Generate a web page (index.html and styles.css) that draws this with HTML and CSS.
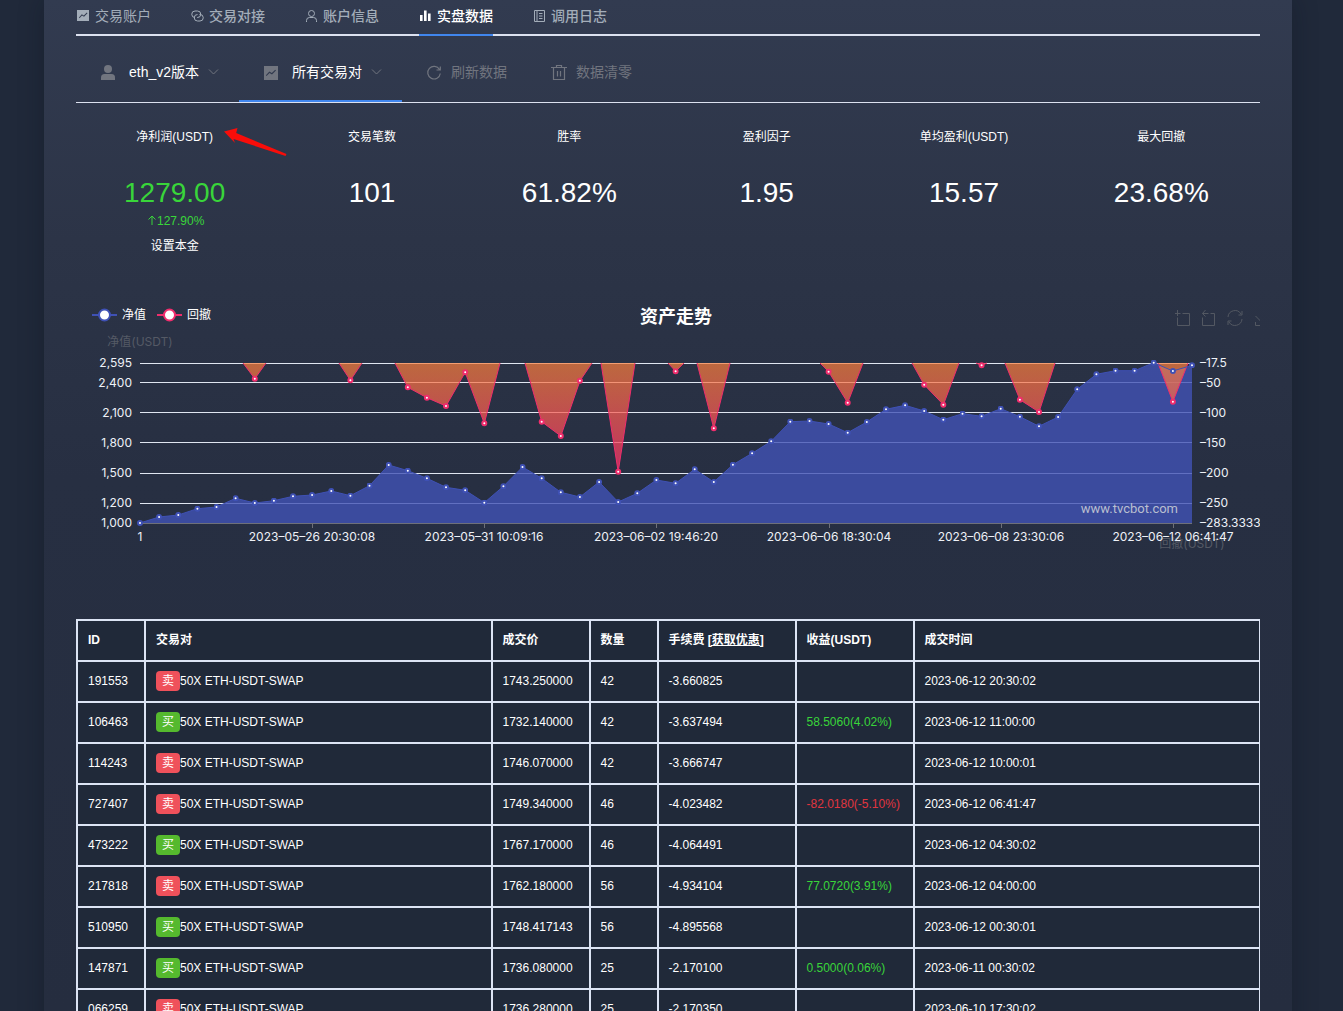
FILE: index.html
```html
<!DOCTYPE html>
<html lang="zh-CN">
<head>
<meta charset="utf-8">
<meta name="viewport" content="width=device-width, initial-scale=1">
<title>实盘数据</title>
<link rel="stylesheet" href="styles.css">
</head>
<body>
<main class="panel">
  <nav class="tabs">
    <a class="tab tab-light" href="#account"><svg class="icon" viewBox="0 0 14 14"><path fill="currentColor" fill-rule="evenodd" d="M0 1h12v11H0zM2.500 9.200l2.500-2.700 2 1.300L10.500 4.300l-.7-.7-3 2.900-2-1.300L2 8.500z"/></svg>交易账户</a>
    <a class="tab" href="#connect"><svg class="icon" viewBox="0 0 14 14" fill="none" stroke="currentColor"><path d="M4 8.500A3.200 3.200 0 0 1 4 2h2.500a3.200 3.200 0 0 1 0 6.500H6M8.500 5.500H9a3.200 3.200 0 0 1 0 6.500H6.500a3.200 3.200 0 0 1 0-6.500"/></svg>交易对接</a>
    <a class="tab" href="#info"><svg class="icon" viewBox="0 0 14 14" fill="none" stroke="currentColor"><circle cx="6.500" cy="4.500" r="3"/><path d="M1.500 13v-1.500Q1.500 8.500 4.500 8.500h4q3 0 3 3V13"/></svg>账户信息</a>
    <a class="tab tab-active" href="#live"><svg class="icon" viewBox="0 0 14 14"><path fill="currentColor" d="M1 6h2.600v6H1zM5 1.500h2.600V12H5zM9 4.500h2.600V12H9z"/></svg>实盘数据</a>
    <a class="tab" href="#logs"><svg class="icon" viewBox="0 0 14 14" fill="none" stroke="currentColor"><path d="M1.500 1.500h10v11h-10zM4 1.500v11M6 4.500h3.500M6 7h3.500M6 9.500h3.500"/></svg>调用日志</a>
  </nav>

  <div class="menu">
    <button class="menu-item menu-select" type="button"><svg class="menu-icon" viewBox="0 0 24 24"><circle cx="12" cy="9" r="4" fill="currentColor"/><path fill="currentColor" d="M5 20v-2.500q0-3.500 3.500-3.500h7q3.500 0 3.500 3.500v2.500z"/></svg><span>eth_v2版本</span><svg class="chevron" viewBox="0 0 11 12"><path d="M1 3.500l4.500 4.500L10 3.500" fill="none" stroke="currentColor"/></svg></button>
    <button class="menu-item menu-select menu-active" type="button"><svg class="menu-icon" viewBox="0 0 24 24"><path fill="currentColor" fill-rule="evenodd" d="M5 6h14v14H5zM7.500 16l3-3 2.500 1.500 4-4-.8-.8-3.400 3.300-2.400-1.500-3.500 3.700z"/></svg><span>所有交易对</span><svg class="chevron" viewBox="0 0 11 12"><path d="M1 3.500l4.500 4.500L10 3.500" fill="none" stroke="currentColor"/></svg></button>
    <button class="menu-item" type="button"><svg class="menu-icon" viewBox="0 0 24 24" fill="none" stroke="currentColor" stroke-width="1.200"><path d="M17.500 9.500A6.300 6.300 0 1 0 18.300 13.500M18.300 6.500v3.500H14.500"/></svg><span>刷新数据</span></button>
    <button class="menu-item" type="button"><svg class="menu-icon" viewBox="0 0 24 24" fill="none" stroke="currentColor" stroke-width="1.200"><path d="M4 7.500h16M6.500 7.500v12h11v-12M9.500 7V5.500h5V7M10.500 11v5.500M13.500 11v5.500"/></svg><span>数据清零</span></button>
  </div>

  <section class="stats">
    <div class="stat">
      <div class="stat-label">净利润(USDT)<svg class="pointer" viewBox="0 0 64 30"><path fill="#f80d0a" d="M1 4.500L14.500 1l-1.300 5 50.300 21-1 2L10.500 12l1.500 4z"/></svg></div>
      <div class="stat-value up">1279.00</div>
      <div class="stat-change up"><svg class="arrow-up" viewBox="0 0 10 12"><path d="M5 10V1M1.500 4.500L5 1l3.500 3.500" fill="none" stroke="currentColor"/></svg>127.90%</div>
      <button class="capital" type="button">设置本金</button>
    </div>
    <div class="stat"><div class="stat-label">交易笔数</div><div class="stat-value">101</div></div>
    <div class="stat"><div class="stat-label">胜率</div><div class="stat-value">61.82%</div></div>
    <div class="stat"><div class="stat-label">盈利因子</div><div class="stat-value">1.95</div></div>
    <div class="stat"><div class="stat-label">单均盈利(USDT)</div><div class="stat-value">15.57</div></div>
    <div class="stat"><div class="stat-label">最大回撤</div><div class="stat-value">23.68%</div></div>
  </section>

  <section class="chart">
    <header class="chart-head">
      <div class="legend">
        <span class="legend-item"><svg class="legend-mark" viewBox="0 0 25 14"><path d="M0 7h25" stroke="#3f51b5" stroke-width="2"/><circle cx="12.500" cy="7" r="5.500" fill="#fff" stroke="#3f51b5" stroke-width="2"/></svg>净值</span>
        <span class="legend-item"><svg class="legend-mark" viewBox="0 0 25 14"><path d="M0 7h25" stroke="#f02d6d" stroke-width="2"/><circle cx="12.500" cy="7" r="5.500" fill="#fff" stroke="#f02d6d" stroke-width="2"/></svg>回撤</span>
      </div>
      <h2 class="chart-title">资产走势</h2>
      <div class="tools">
        <button class="tool" type="button" aria-label="区域缩放"><svg viewBox="0 0 16 18"><path d="M-.5 4.500h6M7.500 4.500h7v12h-12v-8M2.500 1v6"/></svg></button>
        <button class="tool" type="button" aria-label="区域缩放还原"><svg viewBox="0 0 16 18"><path d="M4.500 1L1.500 4.500 4.500 7.500M1.500 4.500h6M9.500 4.500h4v12h-12v-8"/></svg></button>
        <button class="tool" type="button" aria-label="还原"><svg viewBox="0 0 16 18"><path d="M1 8a7 7 0 0 1 13-3M15 2v4h-3.500M15 10a7 7 0 0 1-13 3M1 16v-4h3.500"/></svg></button>
        <button class="tool" type="button" aria-label="保存为图片"><svg viewBox="0 0 16 18"><path d="M2.500 7l5 5L12.500 7M7.500 0v11M7 16.500H2.500V13M7 16.500h7V13"/></svg></button>
      </div>
    </header>
    <svg class="plot" viewBox="76 328 1184 232" role="img" aria-label="资产走势">
      <defs>
        <linearGradient id="fall" gradientUnits="userSpaceOnUse" x1="0" y1="363" x2="0" y2="472"><stop offset="0" stop-color="#fc803c" stop-opacity=".7"/><stop offset="1" stop-color="#f5306b" stop-opacity=".76"/></linearGradient>
        <marker id="dot" viewBox="0 0 6 6" refX="3" refY="3" markerWidth="6" markerHeight="6" markerUnits="userSpaceOnUse"><circle class="worth-dot" cx="3" cy="3" r="2"/></marker>
      </defs>
      <path class="grid" d="M140 363.500H1192M140 382.500H1192M140 412.500H1192M140 442.500H1192M140 473.500H1192M140 503.500H1192"/>
      <path class="axis" d="M140 523.500H1192M312.500 523v5M484.500 523v5M656.500 523v5M829.500 523v5M1001.500 523v5M1173.500 523v5"/>
      <g id="worth-fill"></g>
      <g class="fall">
        <path d="M243 363L254.800 378.700 266 363M339 363L350.400 380.300 362 363M395 363L407.800 387.300 426.900 397.700 446 406 465.200 372.300 484.300 423.300 500 363M525 363L541.700 421.700 560.800 436 580 380.700 592 363M601 363L618.200 471.700 635 363M668 363L675.600 371.300 684 363M697 363L713.800 428.300 730 363M820 363L828.600 371.700 847.700 402.700 863 363M912 363L924.200 384.700 943.400 404.700 959 363M976 363L981.600 365.300 987 363M1005 363L1019.900 399.700 1039 412 1055 363M1158 363L1172.900 401.700 1188 363"/>
      </g>
      <g id="worth"></g>
      <g id="fall-dots"></g>
      <g class="scale" text-anchor="end"><text x="132" y="367">2,595</text><text x="132" y="387">2,400</text><text x="132" y="417">2,100</text><text x="132" y="447">1,800</text><text x="132" y="477">1,500</text><text x="132" y="507">1,200</text><text x="132" y="527">1,000</text></g>
      <g class="scale"><text x="1200" y="367">–17.5</text><text x="1200" y="387">–50</text><text x="1200" y="417">–100</text><text x="1200" y="447">–150</text><text x="1200" y="477">–200</text><text x="1200" y="507">–250</text><text x="1200" y="527">–283.3333</text></g>
      <g class="axis-name" text-anchor="middle"><text x="140" y="346">净值(USDT)</text><text x="1192" y="548">回撤(USDT)</text></g>
      <g class="scale" text-anchor="middle"><text x="140" y="541">1</text><text x="312" y="541">2023–05–26 20:30:08</text><text x="484" y="541">2023–05–31 10:09:16</text><text x="656" y="541">2023–06–02 19:46:20</text><text x="829" y="541">2023–06–06 18:30:04</text><text x="1001" y="541">2023–06–08 23:30:06</text><text x="1173" y="541">2023–06–12 06:41:47</text></g>
      <text class="brand" x="1178" y="513" text-anchor="end">www.tvcbot.com</text>
    </svg>
  </section>

  <div class="trades-wrap">
  <table class="trades">
    <colgroup><col class="c-id"><col><col class="c-price"><col class="c-size"><col class="c-fee"><col class="c-gain"><col></colgroup>
    <thead><tr><th>ID</th><th>交易对</th><th>成交价</th><th>数量</th><th>手续费 <a href="#fee">[获取优惠]</a></th><th>收益(USDT)</th><th>成交时间</th></tr></thead>
    <tbody>
      <tr><td>191553</td><td><span class="tag sell">卖</span>50X ETH-USDT-SWAP</td><td>1743.250000</td><td>42</td><td>-3.660825</td><td></td><td>2023-06-12 20:30:02</td></tr>
      <tr><td>106463</td><td><span class="tag buy">买</span>50X ETH-USDT-SWAP</td><td>1732.140000</td><td>42</td><td>-3.637494</td><td class="up">58.5060(4.02%)</td><td>2023-06-12 11:00:00</td></tr>
      <tr><td>114243</td><td><span class="tag sell">卖</span>50X ETH-USDT-SWAP</td><td>1746.070000</td><td>42</td><td>-3.666747</td><td></td><td>2023-06-12 10:00:01</td></tr>
      <tr><td>727407</td><td><span class="tag sell">卖</span>50X ETH-USDT-SWAP</td><td>1749.340000</td><td>46</td><td>-4.023482</td><td class="down">-82.0180(-5.10%)</td><td>2023-06-12 06:41:47</td></tr>
      <tr><td>473222</td><td><span class="tag buy">买</span>50X ETH-USDT-SWAP</td><td>1767.170000</td><td>46</td><td>-4.064491</td><td></td><td>2023-06-12 04:30:02</td></tr>
      <tr><td>217818</td><td><span class="tag sell">卖</span>50X ETH-USDT-SWAP</td><td>1762.180000</td><td>56</td><td>-4.934104</td><td class="up">77.0720(3.91%)</td><td>2023-06-12 04:00:00</td></tr>
      <tr><td>510950</td><td><span class="tag buy">买</span>50X ETH-USDT-SWAP</td><td>1748.417143</td><td>56</td><td>-4.895568</td><td></td><td>2023-06-12 00:30:01</td></tr>
      <tr><td>147871</td><td><span class="tag buy">买</span>50X ETH-USDT-SWAP</td><td>1736.080000</td><td>25</td><td>-2.170100</td><td class="up">0.5000(0.06%)</td><td>2023-06-11 00:30:02</td></tr>
      <tr><td>066259</td><td><span class="tag sell">卖</span>50X ETH-USDT-SWAP</td><td>1736.280000</td><td>25</td><td>-2.170350</td><td></td><td>2023-06-10 17:30:02</td></tr>
    </tbody>
  </table>
  </div>
</main>
<script src="chart.js"></script>
</body>
</html>
```
FILE: styles.css
```css
* { box-sizing: border-box; }
html { scrollbar-width: none; background: #20293a; }
body {
  margin: 0;
  padding: 0 51px 0 44px;
  color: #fff;
  font: 12px/20px "Liberation Sans", "Noto Sans CJK SC", sans-serif;
}
button { font: inherit; color: inherit; background: none; border: 0; padding: 0; }
a { color: inherit; text-decoration: none; }
.panel {
  padding: 0 32px 32px;
  background: linear-gradient(#323b50 0, #2c3447 240px, #272f42 480px, #252d3f 1011px);
  box-shadow: 0 0 24px rgba(10, 16, 28, .3);
}
.up { color: #39d53a; }
.down { color: #e0353f; }

.tabs { display: flex; gap: 40px; padding-left: 1px; border-bottom: 2px solid #dce1ef; }
.tab {
  display: flex;
  align-items: center;
  gap: 4px;
  height: 36px;
  margin-bottom: -2px;
  padding-bottom: 2px;
  border-bottom: 2px solid transparent;
  color: #a3adb9;
  font-size: 14px;
  font-weight: 500;
}
.tab-light { font-weight: 400; }
.tab-active { color: #fff; border-color: #4086ee; }
.icon { width: 14px; height: 14px; }

.menu { display: flex; height: 67px; border-bottom: 1px solid #dce1ef; }
.menu-item {
  display: flex;
  align-items: center;
  gap: 5px;
  padding: 10px 20px 2px;
  color: #71757f;
  font-size: 14px;
  border-bottom: 2px solid transparent;
}
.menu-select { gap: 9px; }
.menu-select span { color: #fff; }
.menu-active { border-color: #4086ee; }
.menu-icon { width: 24px; height: 24px; }
.chevron { width: 11px; height: 12px; }

.stats { display: grid; grid-template-columns: repeat(6, 1fr); padding-top: 24px; text-align: center; }
.stat-label { position: relative; }
.stat-value { margin-top: 30px; font-size: 28px; line-height: 32px; }
.stat-change { display: flex; justify-content: center; align-items: center; margin-top: 2px; padding-left: 2px; }
.arrow-up { width: 10px; height: 12px; }
.capital { margin-top: 5px; }
.pointer { position: absolute; left: 147px; top: 0; width: 64px; height: 30px; }

.chart { margin-top: 44px; }
.chart-head { display: grid; grid-template-columns: 1fr auto 1fr; align-items: center; height: 28px; padding-left: 16px; }
.legend { display: flex; gap: 11px; padding-top: 2px; }
.legend-item { display: flex; align-items: center; gap: 5px; }
.legend-mark { width: 25px; height: 14px; }
.chart-title { margin: 0; padding-top: 6px; font-size: 18px; line-height: 22px; }
.tools { justify-self: end; display: flex; gap: 10px; width: 85px; overflow: hidden; padding-top: 8px; }
.tool { flex: none; width: 16px; height: 18px; }
.tool svg { display: block; width: 16px; height: 18px; fill: none; stroke: #535862; }
.plot { display: block; width: 100%; height: auto; font: 12px Inter, "Noto Sans CJK SC", sans-serif; }
.grid { stroke: #e0e6f1; fill: none; }
.axis { stroke: #6e7079; fill: none; }
.scale { fill: #eef1f7; }
.axis-name { fill: #555a65; }
.brand { fill: #b9bfd0; font-family: Roboto, sans-serif; font-size: 13px; }
.worth-area { fill: #4152b5; fill-opacity: .8; }
.worth-line { fill: none; stroke: #3f51b5; }
.worth-dot { fill: #fff; stroke: #3f51b5; stroke-width: 2px; }
.fall { fill: url(#fall); stroke: #f02d6d; }
.fall-dot { fill: #fff; stroke: #f02d6d; stroke-width: 2px; }

.trades-wrap { margin-top: 59px; overflow: hidden; }
.trades {
  width: calc(100% + 1px);
  table-layout: fixed;
  border-collapse: collapse;
  background: #202939;
}
.trades th, .trades td { height: 41px; padding: 0 10px 2px; border: 2px solid #dce4f4; text-align: left; }
.trades th a { text-decoration: underline; }
.c-id, .c-size { width: 68px; }
.c-price { width: 98px; }
.c-fee { width: 138px; }
.c-gain { width: 118px; }
.tag { display: inline-block; width: 24px; height: 20px; border-radius: 4px; text-align: center; }
.sell { background: #ef515b; }
.buy { background: #55b92e; }
```
FILE: chart.js
```js
const left = 140, step = 1052 / 55, base = 523;
const worth = [523,517,515,508.7,507,498.3,503,500.7,496.3,495,491,495.7,485.7,465,470.7,478.3,487.3,490.3,502.7,486.3,467,478.3,492.3,497,482,502,493.3,480,483.3,469.3,482,464.7,453.3,441.3,421.7,421,424,432.7,422,409.3,405.3,411,419.7,413.7,416.3,408.7,416.7,426.3,417,389.3,374.3,370.7,370.7,362.7,371,365.3];
const fall = {6:378.7,11:380.3,14:387.3,15:397.7,16:406,17:372.3,18:423.3,21:421.7,22:436,23:380.7,25:471.7,28:371.3,30:428.3,36:371.7,37:402.7,41:384.7,42:404.7,44:365.3,46:399.7,47:412,54:401.7};
const x = i => (left + i * step).toFixed(1);
const points = worth.map((y, i) => `${x(i)},${y}`).join(" ");
document.getElementById("worth-fill").innerHTML =
  `<polygon class="worth-area" points="${left},${base} ${points} ${x(55)},${base}"/>`;
document.getElementById("worth").innerHTML =
  `<polyline class="worth-line" points="${points}" marker-start="url(#dot)" marker-mid="url(#dot)" marker-end="url(#dot)"/>`;
document.getElementById("fall-dots").innerHTML =
  Object.entries(fall).map(([i, y]) => `<circle class="fall-dot" cx="${x(i)}" cy="${y}" r="2"/>`).join("");
```
